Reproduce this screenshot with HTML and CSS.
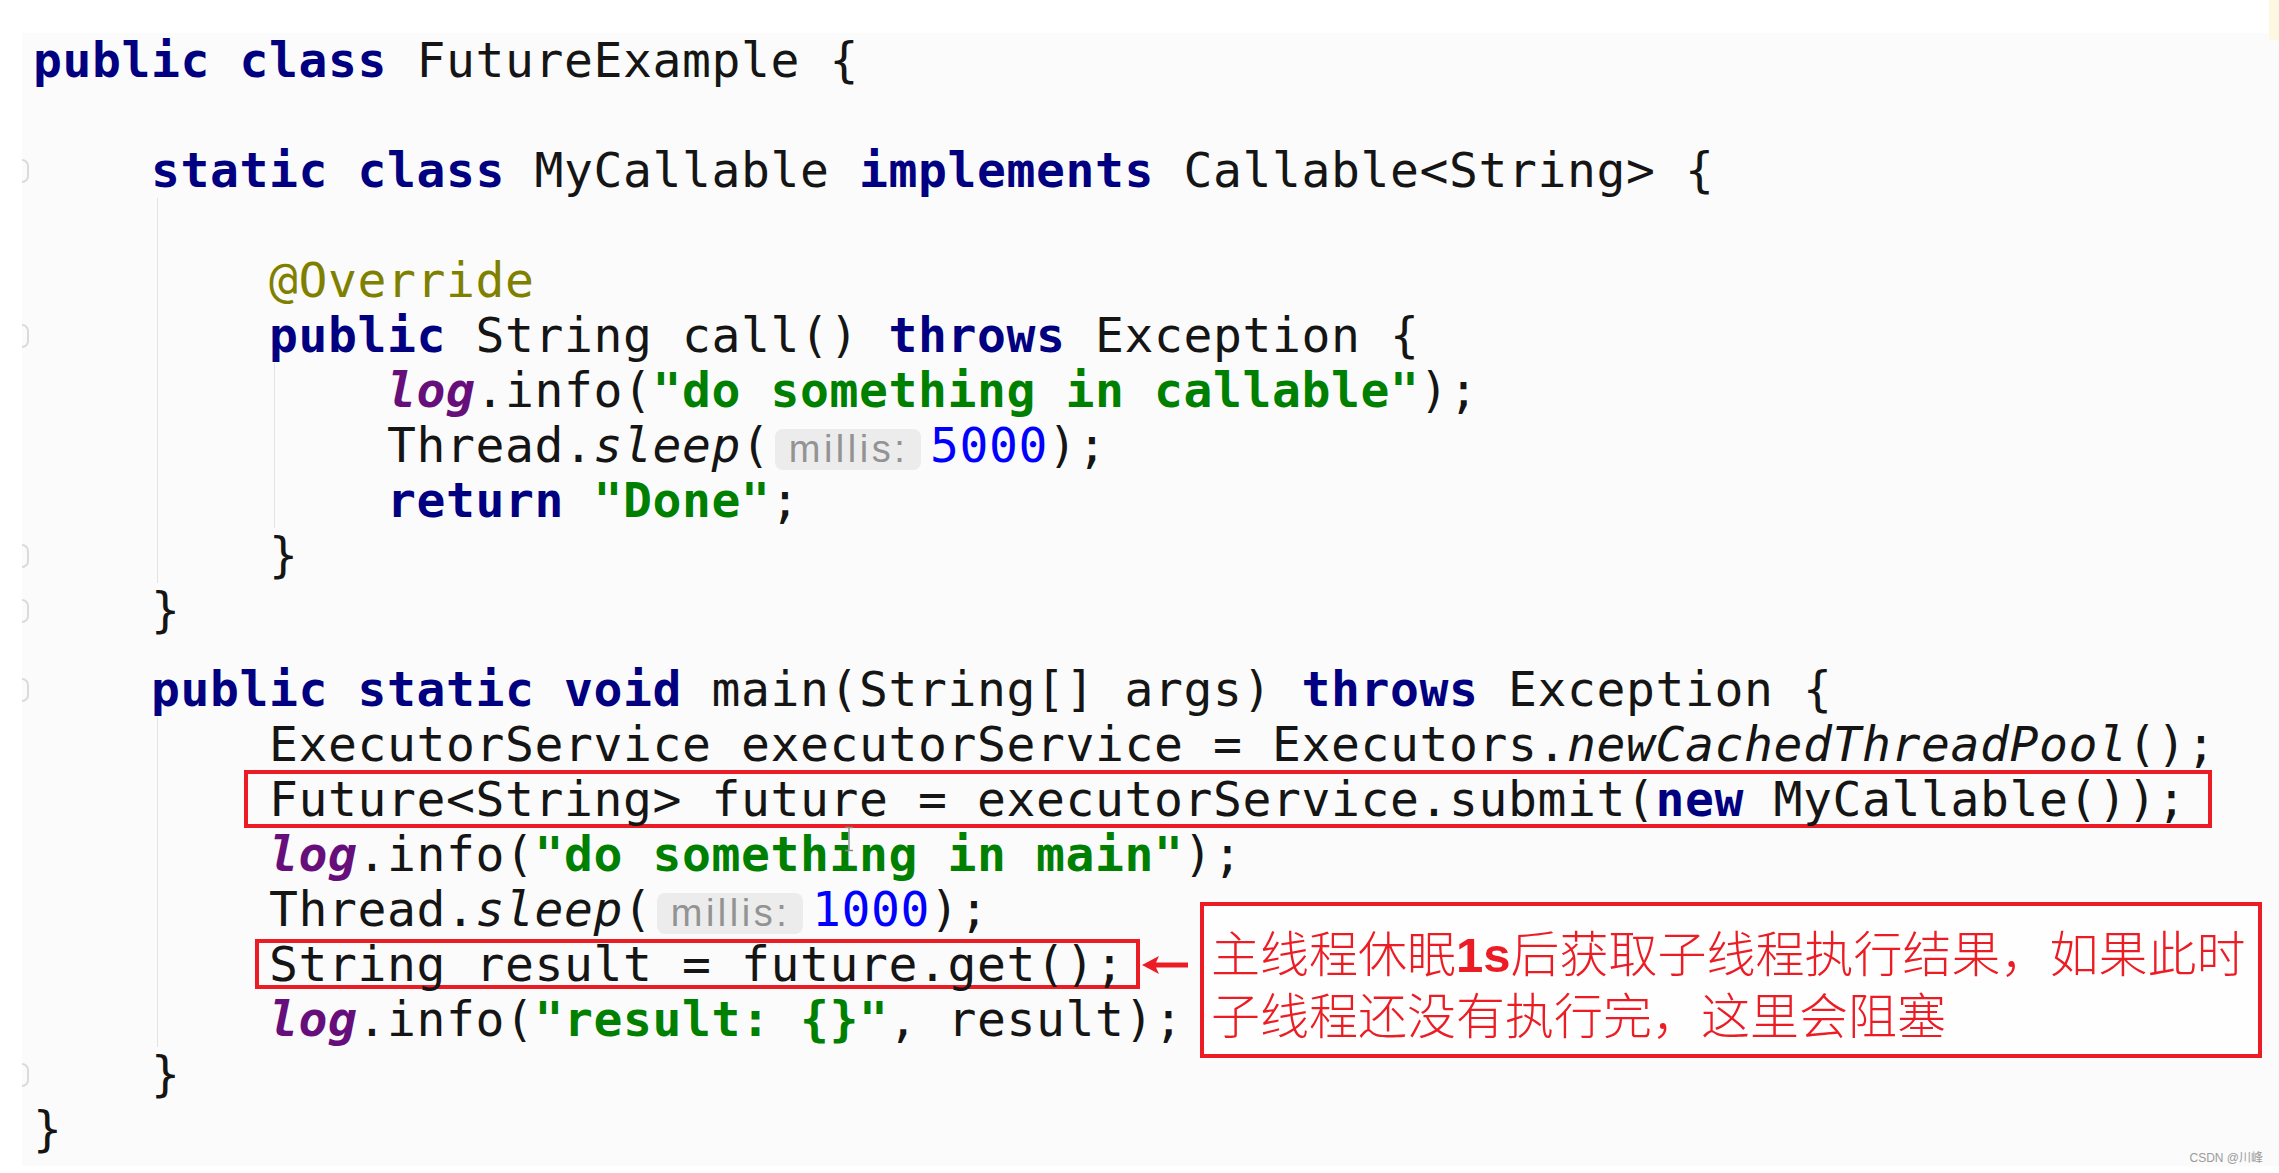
FILE: index.html
```html
<!DOCTYPE html>
<html lang="en">
<head>
<meta charset="utf-8">
<title>FutureExample</title>
<link rel="stylesheet" href="styles.css">
</head>
<body>
<div class="page">
  <div class="topbar"><span class="topmark"></span></div>
  <div class="editor">
    <div class="code">
      <div class="ln"><span class="g"></span><span class="t"><span class="kw">public class</span> FutureExample {</span></div>
      <div class="ln"><span class="g"></span><span class="t"></span></div>
      <div class="ln"><span class="g f"></span><span class="t">    <span class="kw">static class</span> MyCallable <span class="kw">implements</span> Callable&lt;String&gt; {</span></div>
      <div class="blk blk4">
        <div class="ln"><span class="g"></span><span class="t"></span></div>
        <div class="ln"><span class="g"></span><span class="t">        <span class="an">@Override</span></span></div>
        <div class="ln"><span class="g f"></span><span class="t">        <span class="kw">public</span> String call() <span class="kw">throws</span> Exception {</span></div>
        <div class="blk blk8">
          <div class="ln"><span class="g"></span><span class="t">            <span class="fld">log</span>.info(<span class="str">"do something in callable"</span>);</span></div>
          <div class="ln"><span class="g"></span><span class="t">            Thread.<span class="sm">sleep</span>(<span class="hint">millis:</span><span class="num">5000</span>);</span></div>
          <div class="ln"><span class="g"></span><span class="t">            <span class="kw">return</span> <span class="str">"Done"</span>;</span></div>
        </div>
        <div class="ln"><span class="g f"></span><span class="t">        }</span></div>
      </div>
      <div class="ln"><span class="g f"></span><span class="t">    }</span></div>
      <div class="gap"></div>
      <div class="ln"><span class="g f"></span><span class="t">    <span class="kw">public static void</span> main(String[] args) <span class="kw">throws</span> Exception {</span></div>
      <div class="blk blk4">
        <div class="ln"><span class="g"></span><span class="t">        ExecutorService executorService = Executors.<span class="sm">newCachedThreadPool</span>();</span></div>
        <div class="ln"><span class="g"></span><span class="t">        <span class="mk mk1">Future&lt;String&gt; future = executorService.submit(<span class="kw">new</span> MyCallable());</span></span></div>
        <div class="ln"><span class="g"></span><span class="t">        <span class="fld">log</span>.info(<span class="str">"do something in main"</span>);</span></div>
        <div class="ln"><span class="g"></span><span class="t">        Thread.<span class="sm">sleep</span>(<span class="hint">millis:</span><span class="num">1000</span>);</span></div>
        <div class="ln"><span class="g"></span><span class="t">        <span class="mk mk2">String result = future.get();</span></span></div>
        <div class="ln"><span class="g"></span><span class="t">        <span class="fld">log</span>.info(<span class="str">"result: {}"</span>, result);</span></div>
      </div>
      <div class="ln"><span class="g f"></span><span class="t">    }</span></div>
      <div class="ln"><span class="g"></span><span class="t">}</span></div>
    </div>
  </div>

  <svg class="arrow" width="46" height="20" viewBox="0 0 46 20"><polygon points="0,10 17,1 14,7.5 46,7.5 46,12.5 14,12.5 17,19" fill="#ec1c24"/></svg>
  <div class="note">
    <div class="nl">主线程休眠<b>1s</b>后获取子线程执行结果，如果此时</div>
    <div class="nl">子线程还没有执行完，这里会阻塞</div>
  </div>
  <svg class="ibeam" width="12" height="26" viewBox="0 0 12 26"><path d="M2 1.5h8M6 1.5v23M2 24.5h8" stroke="#8a8a8a" stroke-width="1.4" fill="none"/></svg>
  <div class="wm">CSDN @川峰</div>
</div>
</body>
</html>
```
FILE: styles.css
```css
html, body {
  margin: 0;
  padding: 0;
  background: #ffffff;
}

.page {
  position: relative;
  width: 2279px;
  height: 1173px;
  overflow: hidden;
  background: #ffffff;
}

.topbar {
  height: 40px;
  display: flex;
  justify-content: flex-end;
}

.topmark {
  width: 10px;
  height: 40px;
  background: #fdf8e2;
}

.editor {
  margin-left: 22px;
  height: 1133px;
  background: #fbfbfb;
}

.code {
  margin-top: -7px;
  font-family: "DejaVu Sans Mono", monospace;
  font-size: 48px;
  letter-spacing: 0.6px;
  color: #151515;
}

.ln {
  display: flex;
  height: 55px;
}

.g {
  flex: none;
  width: 11px;
  display: flex;
  align-items: center;
}

.g.f::before {
  content: "";
  width: 5px;
  height: 20px;
  border: 2px solid #dadada;
  border-left: none;
  border-radius: 0 10px 10px 0;
}

.t {
  white-space: pre;
  line-height: 55px;
}

.gap {
  height: 24px;
}

.blk {
  background-image: linear-gradient(#e3e3e3, #e3e3e3);
  background-repeat: no-repeat;
  background-size: 1px 100%;
}

.blk4 {
  background-position: 135px 0;
}

.blk8 {
  background-position: 252px 0;
}

.kw {
  color: #000080;
  font-weight: bold;
}

.an {
  color: #808000;
}

.str {
  color: #008000;
  font-weight: bold;
}

.num {
  color: #0000ff;
}

.fld {
  color: #660e7a;
  font-weight: bold;
  font-style: italic;
}

.sm {
  font-style: italic;
}

.hint {
  display: inline-block;
  box-sizing: border-box;
  width: 146px;
  height: 41px;
  margin: 0 8.5px 0 5px;
  padding: 0;
  text-align: center;
  font-family: "Liberation Sans", Arial, sans-serif;
  font-size: 38px;
  letter-spacing: 3.5px;
  line-height: 41px;
  color: #939393;
  background: #ececec;
  border-radius: 8px;
}

.mk {
  display: inline-block;
  border: 4px solid #ec1c24;
}

.mk1 {
  line-height: 50px;
  margin: -4px -26px -4px -25px;
  padding: 0 22px 0 21px;
}

.mk2 {
  line-height: 42px;
  margin: -4px -16px -4px -14px;
  padding: 0 12px 0 10px;
}

.arrow {
  position: absolute;
  left: 1142px;
  top: 955px;
}

.note {
  position: absolute;
  left: 1200px;
  top: 902px;
  width: 1062px;
  height: 156px;
  box-sizing: border-box;
  border: 4px solid #ec1c24;
  background: #fefefe;
  padding: 16px 0 0 7px;
  font-family: "Noto Sans CJK SC", sans-serif;
  font-weight: 300;
  font-size: 49px;
  line-height: 57px;
  color: #ec1c24;
  white-space: nowrap;
}

.note b {
  font-family: "Liberation Sans", Arial, sans-serif;
  font-weight: 700;
}

.ibeam {
  position: absolute;
  left: 843px;
  top: 826px;
}

.wm {
  position: absolute;
  right: 16px;
  top: 1150px;
  font-family: "Liberation Sans", "Noto Sans CJK SC", sans-serif;
  font-size: 12px;
  line-height: 16px;
  color: #9a9a9a;
}
```
